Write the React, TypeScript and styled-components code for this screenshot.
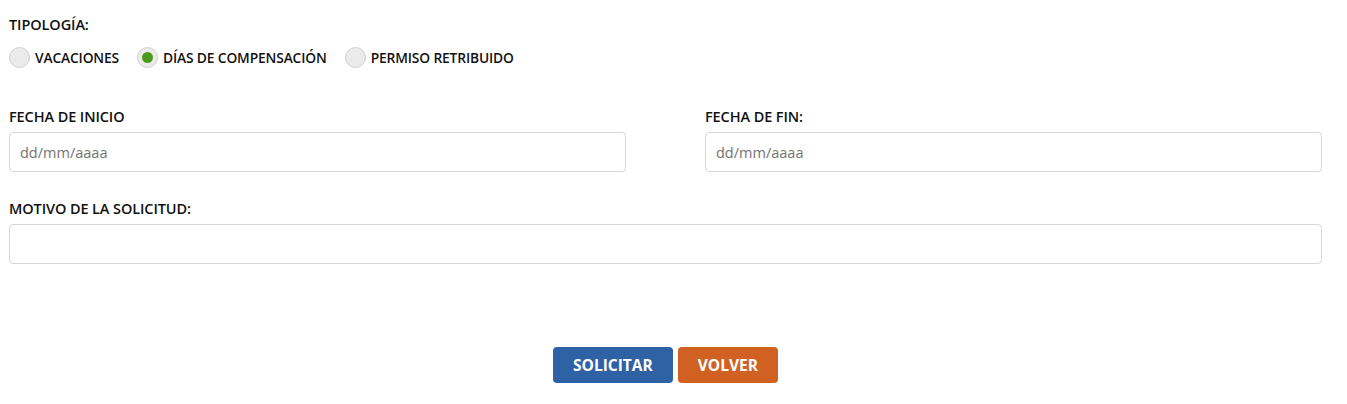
import React from "react";
import styled, { createGlobalStyle } from "styled-components";

const Global = createGlobalStyle`
  html, body { margin: 0; padding: 0; background: #fff; }
  body { font-family: "Open Sans", "Noto Sans", sans-serif; color: #111; }
  * { box-sizing: border-box; }
`;

const Form = styled.form`
  width: 1313px;
  margin-left: 9px;
  padding-top: 16px;
  display: flex;
  flex-direction: column;
`;

const Label = styled.div`
  font-size: 14.5px;
  font-weight: 600;
  letter-spacing: -0.1px;
  line-height: 18px;
  text-transform: uppercase;
`;

const RadioRow = styled.div`
  display: flex;
  align-items: center;
  gap: 18px;
  margin-top: 12px;
  height: 22px;
`;

const RadioItem = styled.label`
  display: flex;
  align-items: center;
  gap: 5px;
  font-size: 13.8px;
  font-weight: 600;
  letter-spacing: -0.15px;
`;

const RadioCircle = styled.span<{ $checked?: boolean }>`
  width: 21px;
  height: 21px;
  border-radius: 50%;
  background: #ebebeb;
  border: 1px solid #cfcfcf;
  display: flex;
  align-items: center;
  justify-content: center;
  &::after {
    content: "";
    width: 11px;
    height: 11px;
    border-radius: 50%;
    background: ${(p) => (p.$checked ? "#4c9a1d" : "transparent")};
  }
`;

const Grid = styled.div`
  display: grid;
  grid-template-columns: 1fr 1fr;
  column-gap: 79px;
  margin-top: 40px;
`;

const Field = styled.div`
  display: flex;
  flex-direction: column;
  gap: 6px;
`;

const Input = styled.div`
  height: 40px;
  border: 1px solid #d6d6d6;
  border-radius: 4px;
  padding: 0 10px;
  display: flex;
  align-items: center;
  font-size: 14.5px;
  color: #737373;
`;

const Motivo = styled(Field)`
  margin-top: 28px;
`;

const Actions = styled.div`
  display: flex;
  justify-content: center;
  gap: 5px;
  margin-top: 83px;
`;

const Button = styled.button<{ $color: string }>`
  height: 36px;
  border: none;
  border-radius: 4px;
  background: ${(p) => p.$color};
  color: #fff;
  font-family: "Open Sans", sans-serif;
  font-weight: 700;
  font-size: 15.5px;
  padding: 0 20px;
  cursor: pointer;
`;

export default function App() {
  return (
    <>
      <Global />
      <Form>
        <Label>Tipología:</Label>
        <RadioRow>
          <RadioItem>
            <RadioCircle />
            VACACIONES
          </RadioItem>
          <RadioItem>
            <RadioCircle $checked />
            DÍAS DE COMPENSACIÓN
          </RadioItem>
          <RadioItem>
            <RadioCircle />
            PERMISO RETRIBUIDO
          </RadioItem>
        </RadioRow>
        <Grid>
          <Field>
            <Label>Fecha de inicio</Label>
            <Input>dd/mm/aaaa</Input>
          </Field>
          <Field>
            <Label>Fecha de fin:</Label>
            <Input>dd/mm/aaaa</Input>
          </Field>
        </Grid>
        <Motivo>
          <Label>Motivo de la solicitud:</Label>
          <Input />
        </Motivo>
        <Actions>
          <Button type="button" $color="#2f62a5">SOLICITAR</Button>
          <Button type="button" $color="#d16123">VOLVER</Button>
        </Actions>
      </Form>
    </>
  );
}
